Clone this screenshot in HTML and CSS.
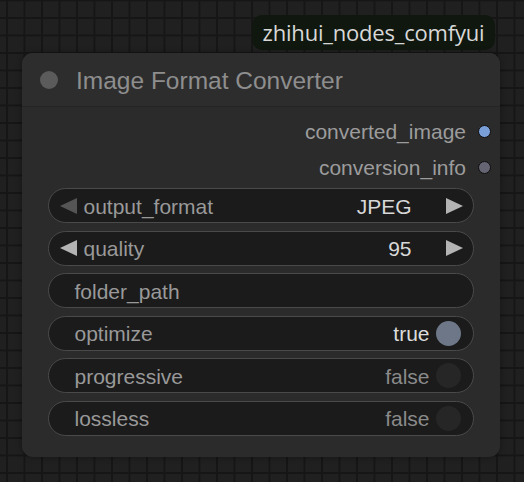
FILE: index.html
```html
<!DOCTYPE html>
<html>
<head>
<meta charset="utf-8">
<link rel="stylesheet" href="styles.css">
</head>
<body>
<div class="canvas">
  <div class="tag">zhihui_nodes_comfyui</div>
  <div class="node">
    <div class="title"><span class="title-dot"></span><span class="title-text">Image Format Converter</span></div>
    <div class="outputs">
      <div class="out"><span>converted_image</span><span class="slot slot-image"></span></div>
      <div class="out"><span>conversion_info</span><span class="slot slot-info"></span></div>
    </div>
    <div class="widgets">
      <div class="widget combo">
        <span class="arrow arrow-left dim"></span>
        <span class="label">output_format</span>
        <span class="value">JPEG</span>
        <span class="arrow arrow-right"></span>
      </div>
      <div class="widget combo">
        <span class="arrow arrow-left"></span>
        <span class="label">quality</span>
        <span class="value">95</span>
        <span class="arrow arrow-right"></span>
      </div>
      <div class="widget text">
        <span class="label">folder_path</span>
      </div>
      <div class="widget toggle">
        <span class="label">optimize</span>
        <span class="value on">true</span>
        <span class="knob knob-on"></span>
      </div>
      <div class="widget toggle">
        <span class="label">progressive</span>
        <span class="value off">false</span>
        <span class="knob"></span>
      </div>
      <div class="widget toggle">
        <span class="label">lossless</span>
        <span class="value off">false</span>
        <span class="knob"></span>
      </div>
    </div>
  </div>
</div>
</body>
</html>
```
FILE: styles.css
```css
html, body {
  margin: 0;
  padding: 0;
}
body {
  width: 524px;
  height: 482px;
  overflow: hidden;
  font-family: "Liberation Sans", Arial, sans-serif;
  background-color: #202020;
  background-image:
    linear-gradient(#161616 1.5px, transparent 1.5px),
    linear-gradient(90deg, #161616 1.5px, transparent 1.5px);
  background-size: 17.5px 17.5px;
  background-position: 6px -0.5px;
}
.canvas {
  display: flex;
  flex-direction: column;
  align-items: flex-start;
  padding-top: 15px;
}
.tag {
  margin-left: 252px;
  width: 243px;
  height: 35px;
  box-sizing: border-box;
  background: #0f170f;
  border-radius: 10px;
  color: #d8d8d8;
  font-family: "Open Sans", "Noto Sans", sans-serif;
  font-size: 22px;
  line-height: 35px;
  text-align: center;
  letter-spacing: -0.2px;
}
.node {
  margin-top: 3px;
  margin-left: 22px;
  width: 478px;
  height: 404px;
  box-sizing: border-box;
  background: #2b2b2b;
  border-radius: 11px;
  box-shadow: 0 0 6px rgba(0,0,0,0.35);
  display: flex;
  flex-direction: column;
}
.title {
  height: 54px;
  box-sizing: border-box;
  border-bottom: 1px solid #242424;
  background: #2d2d2d;
  border-radius: 11px 11px 0 0;
  display: flex;
  align-items: center;
  padding-left: 18px;
  gap: 18px;
}
.title-dot {
  width: 18px;
  height: 18px;
  border-radius: 50%;
  background: #5b5b5b;
}
.title-text {
  color: #8e8e8e;
  font-size: 24.5px;
  padding-top: 2px;
}
.outputs {
  padding-top: 6.5px;
  padding-right: 9.5px;
  display: flex;
  flex-direction: column;
  align-items: flex-end;
}
.out {
  height: 36px;
  display: flex;
  align-items: center;
  gap: 11.5px;
  color: #9c9c9c;
  font-size: 21px;
}
.slot {
  width: 13px;
  height: 13px;
  box-sizing: border-box;
  border-radius: 50%;
  border: 1.5px solid #0e0e0e;
}
.slot-image { background: #7a9fd8; }
.slot-info { background: #646472; }
.widgets {
  margin-top: 2.5px;
  padding: 0 26px;
  display: flex;
  flex-direction: column;
  gap: 7.6px;
}
.widget {
  height: 35px;
  box-sizing: border-box;
  border: 1.5px solid #4a4a4a;
  border-radius: 18px;
  background: #1b1b1b;
  display: flex;
  align-items: center;
  font-size: 21px;
  color: #999;
}
.widget .label,
.widget .value {
  padding-top: 2px;
}
.widget .label {
  flex: 1;
}
.combo {
  padding: 0 10.5px;
}
.combo .label {
  margin-left: 7px;
}
.combo .value {
  color: #d8d8d8;
  margin-right: 34px;
}
.arrow {
  width: 0;
  height: 0;
  border-top: 8.5px solid transparent;
  border-bottom: 8.5px solid transparent;
}
.arrow-left {
  border-right: 17px solid #b4b4b4;
}
.arrow-left.dim {
  border-right-color: #555;
}
.arrow-right {
  border-left: 17px solid #b4b4b4;
}
.text, .toggle {
  padding-left: 25.5px;
  padding-right: 12.5px;
}
.toggle .value {
  margin-right: 6px;
}
.value.on {
  color: #dcdcdc;
}
.value.off {
  color: #8a8a8a;
}
.knob {
  width: 25px;
  height: 25px;
  border-radius: 50%;
  background: #262626;
}
.knob-on {
  background: #6d7787;
}
```
